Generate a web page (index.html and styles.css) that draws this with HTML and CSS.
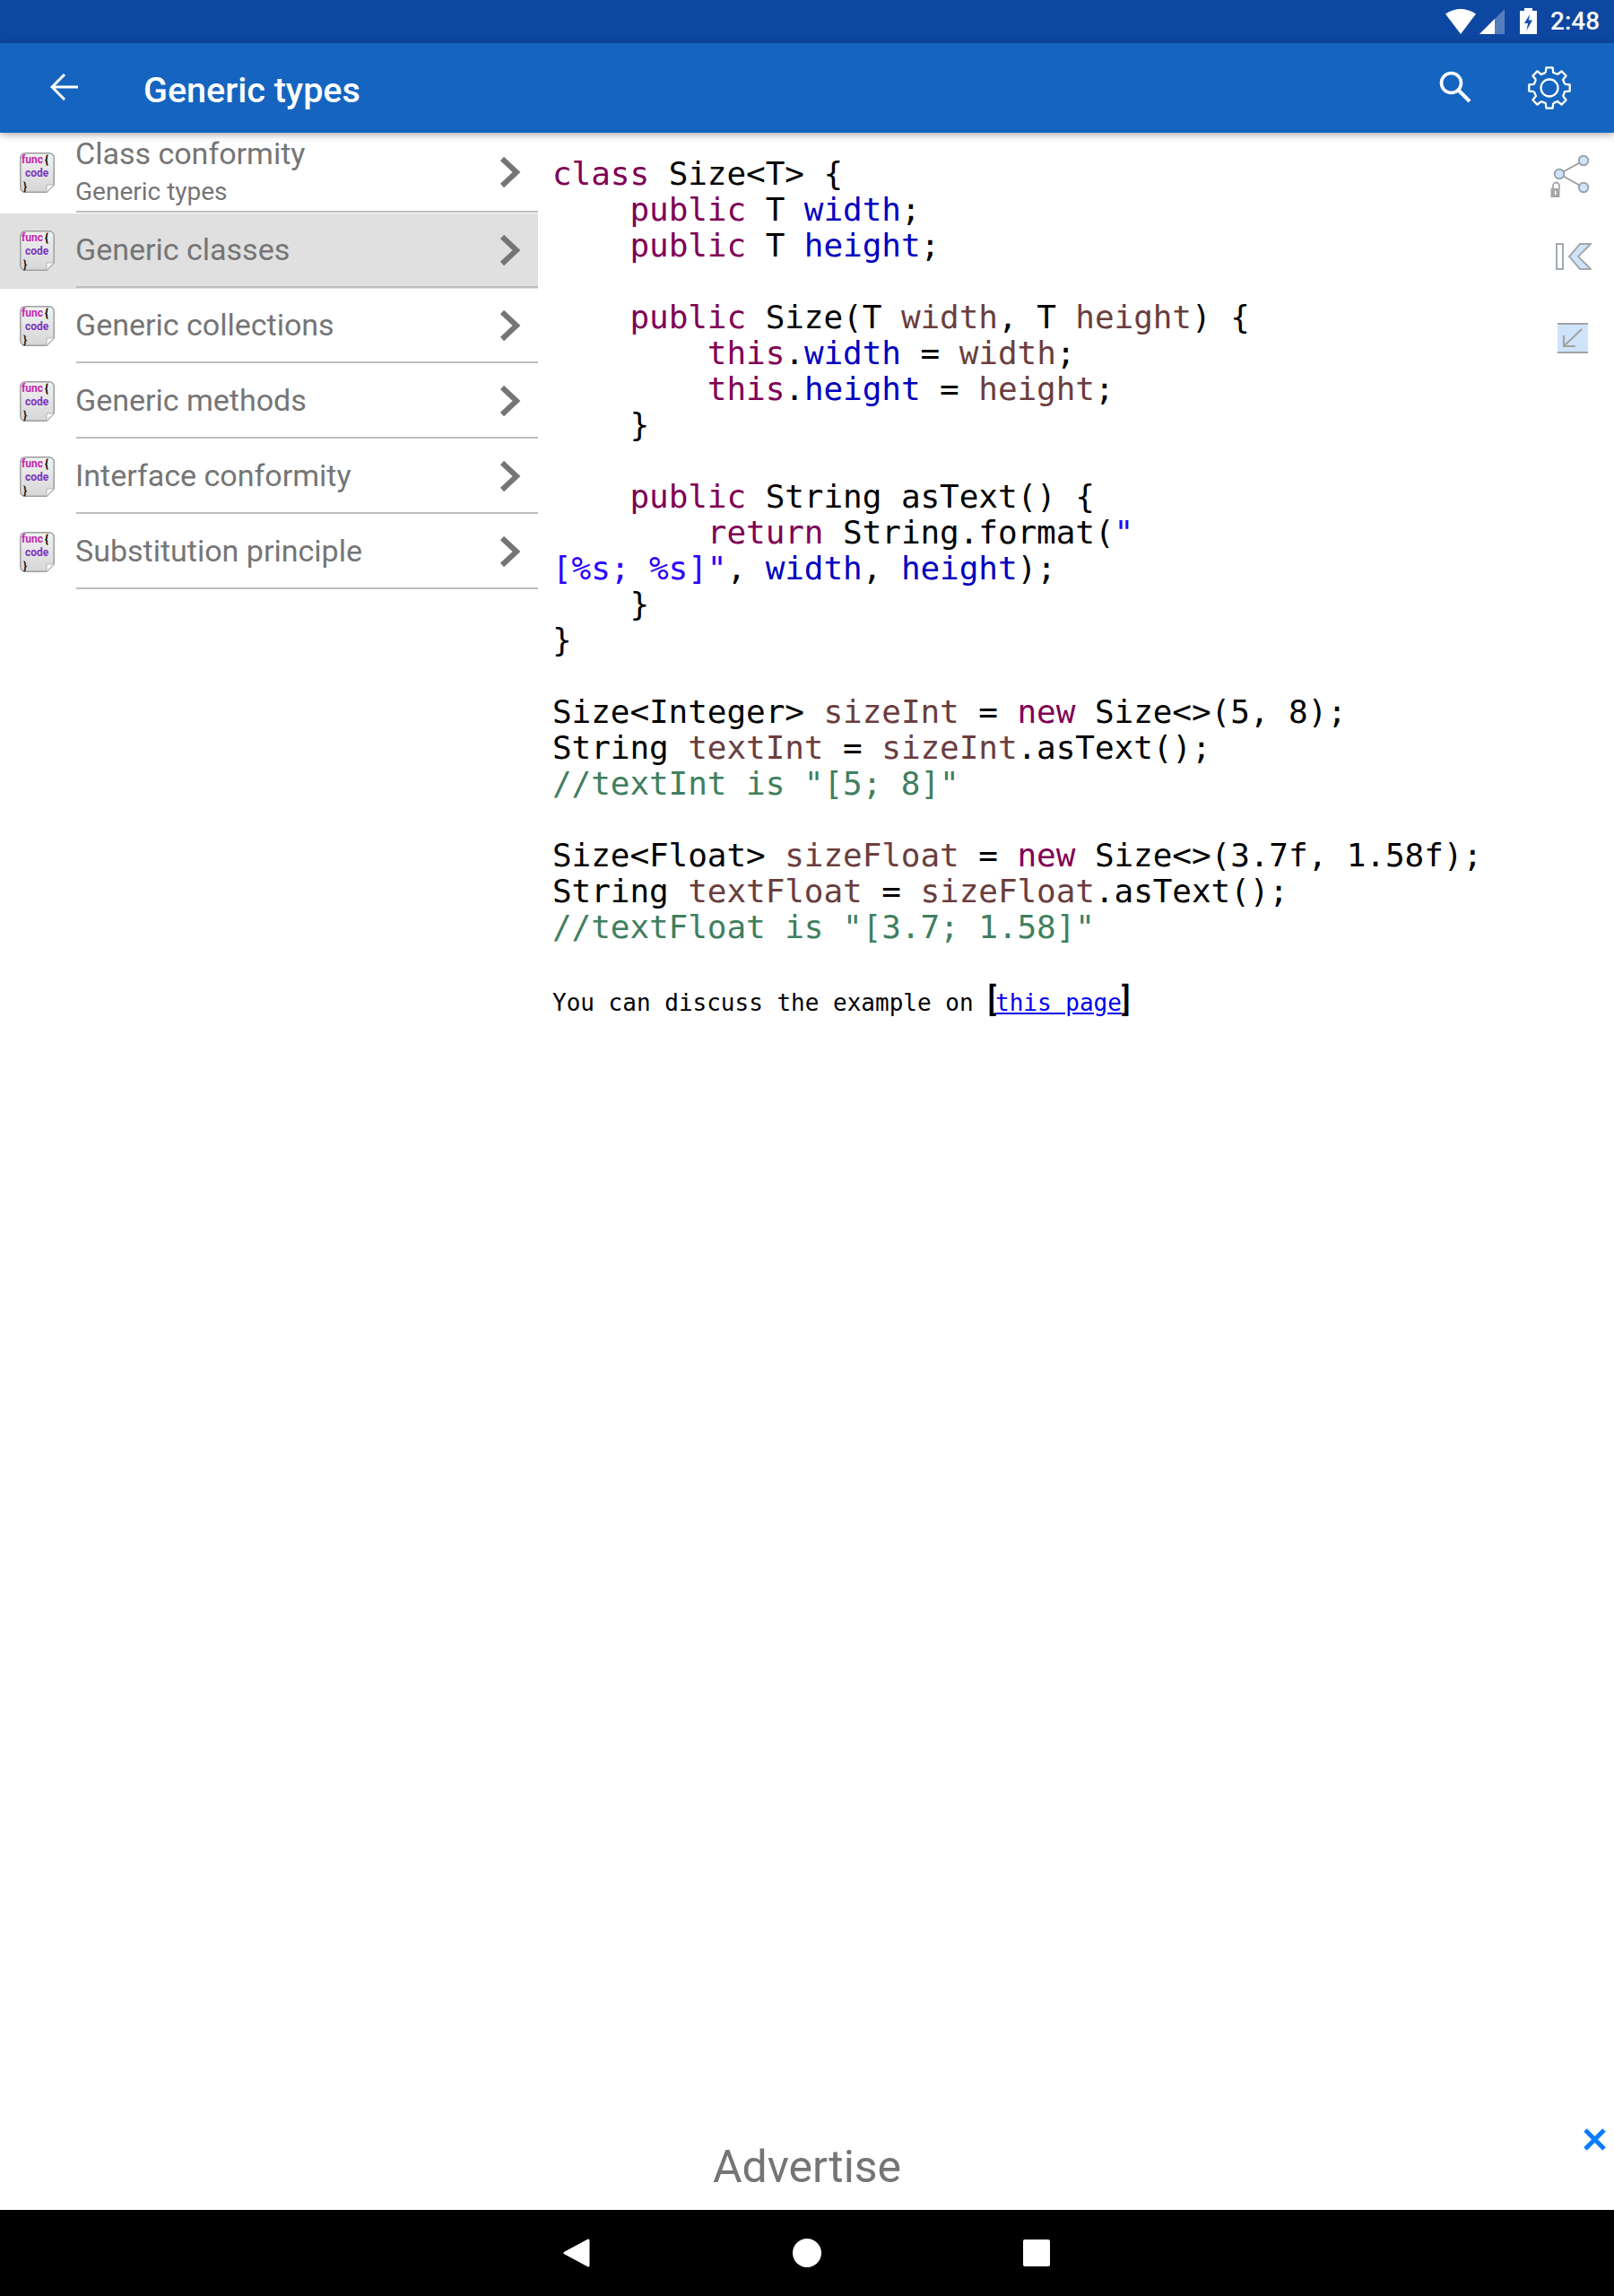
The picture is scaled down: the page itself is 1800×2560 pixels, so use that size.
FILE: index.html
```html
<!DOCTYPE html>
<html lang="en">
<head>
<meta charset="utf-8">
<title>Generic types</title>
<link rel="stylesheet" href="styles.css">
</head>
<body>
<svg class="defs" width="0" height="0" aria-hidden="true">
  <defs>
    <linearGradient id="docfill" x1="0" y1="0" x2="0" y2="1"><stop offset="0" stop-color="#f2f2f2"/><stop offset="1" stop-color="#d6d6d6"/></linearGradient>
    <symbol id="docshape" viewBox="0 0 39 45">
      <path d="M6 .8H33A5.200 5.200 0 0 1 38.200 6V36L30 44.200H6A5.200 5.200 0 0 1 .8 39V6A5.200 5.200 0 0 1 6 .8Z" fill="url(#docfill)" stroke="#9e9e9e" stroke-width="1.500"/>
      <path d="M38.200 36H30V44.200Z" fill="#fafafa" stroke="#b5b5b5" stroke-width="1"/>
    </symbol>
    <path id="tooth" d="M19.800 7L20.400 1.300L27.600 1.300L28.200 7A17.500 17.500 0 0 1 33 9" fill="none" stroke="#fff" stroke-width="2.300" stroke-linejoin="round"/>
    <symbol id="chevron" viewBox="0 0 24 36"><path d="M3 3L19 18L3 33" fill="none" stroke="#757575" stroke-width="6"/></symbol>
  </defs>
</svg>
<div class="page">
  <header class="status-bar">
    <svg class="ic-wifi" width="34" height="28" viewBox="0 0 34 28"><path d="M0 5.500Q17 -5.500 34 5.500L17 28Z" fill="#fff"/></svg>
    <svg class="ic-signal" width="28" height="28" viewBox="0 0 28 28"><path d="M28 0V28H0Z" fill="#fff" opacity=".3"/><path d="M17 11V28H0Z" fill="#fff"/></svg>
    <svg class="ic-battery" width="19" height="29" viewBox="0 0 19 29"><path d="M5 0H14V3H19V29H0V3H5Z" fill="#fff"/><path d="M11 7L5 17H9L7.500 25L14 13.500H10Z" fill="#1552a8"/></svg>
    <span class="clock">2:48</span>
  </header>
  <nav class="app-bar">
    <svg class="ic-back" width="32" height="32" viewBox="0 0 32 32"><path d="M31 16H3M16 2L2 16L16 30" fill="none" stroke="#fff" stroke-width="3"/></svg>
    <h1 class="app-title">Generic types</h1>
    <svg class="ic-search" width="36" height="36" viewBox="0 0 36 36"><circle cx="13.500" cy="13.500" r="11" fill="none" stroke="#fff" stroke-width="3.600"/><path d="M21.500 21.500L34 34" stroke="#fff" stroke-width="4" fill="none"/></svg>
    <svg class="ic-gear" width="48" height="48" viewBox="0 0 48 48">
      <use href="#tooth"/><use href="#tooth" transform="rotate(45 24 24)"/><use href="#tooth" transform="rotate(90 24 24)"/><use href="#tooth" transform="rotate(135 24 24)"/><use href="#tooth" transform="rotate(180 24 24)"/><use href="#tooth" transform="rotate(225 24 24)"/><use href="#tooth" transform="rotate(270 24 24)"/><use href="#tooth" transform="rotate(315 24 24)"/>
      <circle cx="24" cy="24" r="9.500" fill="none" stroke="#fff" stroke-width="2.300"/>
    </svg>
  </nav>
  <main class="main">
    <aside class="sidebar">
      <a class="row row-first">
        <div class="doc"><svg class="doc-bg" width="39" height="45"><use href="#docshape"/></svg><span class="f">func<b>{</b></span><span class="c">code</span><span class="e">}</span></div>
        <div class="row-body"><div class="row-text"><div class="row-title">Class conformity</div><div class="row-sub">Generic types</div></div><svg class="chev" width="24" height="36"><use href="#chevron"/></svg></div>
      </a>
      <a class="row row-active">
        <div class="doc"><svg class="doc-bg" width="39" height="45"><use href="#docshape"/></svg><span class="f">func<b>{</b></span><span class="c">code</span><span class="e">}</span></div>
        <div class="row-body"><div class="row-text"><div class="row-title">Generic classes</div></div><svg class="chev" width="24" height="36"><use href="#chevron"/></svg></div>
      </a>
      <a class="row">
        <div class="doc"><svg class="doc-bg" width="39" height="45"><use href="#docshape"/></svg><span class="f">func<b>{</b></span><span class="c">code</span><span class="e">}</span></div>
        <div class="row-body"><div class="row-text"><div class="row-title">Generic collections</div></div><svg class="chev" width="24" height="36"><use href="#chevron"/></svg></div>
      </a>
      <a class="row">
        <div class="doc"><svg class="doc-bg" width="39" height="45"><use href="#docshape"/></svg><span class="f">func<b>{</b></span><span class="c">code</span><span class="e">}</span></div>
        <div class="row-body"><div class="row-text"><div class="row-title">Generic methods</div></div><svg class="chev" width="24" height="36"><use href="#chevron"/></svg></div>
      </a>
      <a class="row">
        <div class="doc"><svg class="doc-bg" width="39" height="45"><use href="#docshape"/></svg><span class="f">func<b>{</b></span><span class="c">code</span><span class="e">}</span></div>
        <div class="row-body"><div class="row-text"><div class="row-title">Interface conformity</div></div><svg class="chev" width="24" height="36"><use href="#chevron"/></svg></div>
      </a>
      <a class="row">
        <div class="doc"><svg class="doc-bg" width="39" height="45"><use href="#docshape"/></svg><span class="f">func<b>{</b></span><span class="c">code</span><span class="e">}</span></div>
        <div class="row-body"><div class="row-text"><div class="row-title">Substitution principle</div></div><svg class="chev" width="24" height="36"><use href="#chevron"/></svg></div>
      </a>
    </aside>
    <section class="content">
<pre class="code"><span class="k">class</span> Size&lt;T&gt; {
    <span class="k">public</span> T <span class="m">width</span>;
    <span class="k">public</span> T <span class="m">height</span>;

    <span class="k">public</span> Size(T <span class="v">width</span>, T <span class="v">height</span>) {
        <span class="k">this</span>.<span class="m">width</span> = <span class="v">width</span>;
        <span class="k">this</span>.<span class="m">height</span> = <span class="v">height</span>;
    }

    <span class="k">public</span> String asText() {
        <span class="k">return</span> String.format(<span class="s">"</span>
<span class="s">[%s; %s]"</span>, <span class="m">width</span>, <span class="m">height</span>);
    }
}

Size&lt;Integer&gt; <span class="v">sizeInt</span> = <span class="k">new</span> Size&lt;&gt;(5, 8);
String <span class="v">textInt</span> = <span class="v">sizeInt</span>.asText();
<span class="g">//textInt is "[5; 8]"</span>

Size&lt;Float&gt; <span class="v">sizeFloat</span> = <span class="k">new</span> Size&lt;&gt;(3.7f, 1.58f);
String <span class="v">textFloat</span> = <span class="v">sizeFloat</span>.asText();
<span class="g">//textFloat is "[3.7; 1.58]"</span></pre>
      <p class="discuss">You can discuss the example on <span class="br">[</span><a class="link">this page</a><span class="br">]</span></p>
    </section>
    <aside class="tools">
      <svg class="tool-share" width="48" height="50" viewBox="0 0 48 50">
        <path d="M11 22L38 7M11 22L38 37" stroke="#9e9e9e" stroke-width="2"/>
        <circle cx="11" cy="22" r="5.300" fill="#cfe3fb" stroke="#9aa5b1" stroke-width="2"/><circle cx="38" cy="7" r="5.300" fill="#cfe3fb" stroke="#9aa5b1" stroke-width="2"/><circle cx="38" cy="37" r="5.300" fill="#cfe3fb" stroke="#9aa5b1" stroke-width="2"/>
        <path d="M4 38V35A3.500 3.500 0 0 1 11 35V38" fill="none" stroke="#a6a6a6" stroke-width="1.800"/><rect x="1.500" y="38" width="10" height="10" fill="#a6a6a6"/><rect x="6" y="41" width="1.500" height="4" fill="#fff"/>
      </svg>
      <svg class="tool-first" width="40" height="30" viewBox="0 0 40 30">
        <rect x="1" y="1" width="7" height="28" fill="#fff" stroke="#a3a9b0" stroke-width="2"/>
        <path d="M39 1H27L15 15L27 29H39L25 15Z" fill="#cfe3fb" stroke="#a3a9b0" stroke-width="2"/>
      </svg>
      <svg class="tool-min" width="34" height="34" viewBox="0 0 34 34">
        <rect x="0" y="2" width="34" height="30" fill="#cfe3fb"/>
        <rect x="0" y="0" width="34" height="2" fill="#a3a3a3"/><rect x="0" y="32" width="34" height="2" fill="#a3a3a3"/>
        <path d="M27 7L7 26M7 14V26H20" fill="none" stroke="#a3a3a3" stroke-width="2.200"/>
      </svg>
    </aside>
  </main>
  <footer class="ad">
    <span class="ad-text">Advertise</span>
    <svg class="ad-close" width="27" height="25" viewBox="0 0 27 25"><path d="M3 2L24 23M24 2L3 23" stroke="#0a7cff" stroke-width="5" fill="none"/></svg>
  </footer>
  <div class="nav-bar">
    <svg class="nav-back" width="30" height="32" viewBox="0 0 30 32"><path d="M28 2V30L2 16Z" fill="#fff" stroke="#fff" stroke-width="3" stroke-linejoin="round"/></svg>
    <i class="nav-home"></i>
    <i class="nav-recent"></i>
  </div>
</div>
</body>
</html>
```
FILE: styles.css
```css
* { box-sizing: border-box; }
html, body { margin: 0; padding: 0; background: #fff; }
.defs { position: absolute; }
.page { width: 1800px; height: 2560px; display: flex; flex-direction: column; overflow: hidden; font-family: Roboto, sans-serif; }

.status-bar { height: 48px; flex: none; background: #0d47a1; display: flex; align-items: flex-start; padding: 9px 18px 0 0; justify-content: flex-end; color: #fff; }
.ic-wifi { margin-top: 1px; margin-right: 4px; }
.ic-signal { margin-top: 1px; margin-right: 17px; }
.ic-battery { margin-right: 15px; }
.clock { font-size: 28px; font-weight: 500; line-height: 30px; width: 53px; }

.app-bar { height: 100px; flex: none; background: #1565c0; display: flex; align-items: center; position: relative; z-index: 2; box-shadow: 0 2px 8px rgba(0,0,0,.35); padding-left: 56px; color: #fff; }
.ic-back { margin-bottom: 2px; }
.app-title { margin: 0 0 0 72px; flex: 1; font-size: 39.500px; font-weight: 500; line-height: 50px; padding-top: 5px; }
.ic-search { margin-right: 63px; margin-bottom: 2px; }
.ic-gear { margin-right: 48px; }

.main { flex: 1; display: flex; min-height: 0; }
.sidebar { width: 600px; flex: none; }
.row { display: flex; height: 84px; padding-bottom: 1px; color: #757575; }
.row-first { height: 90px; }
.row-active { background: #e0e0e0; }
.doc { width: 39px; height: 45px; margin: 19px 0 0 22px; flex: none; position: relative; font-weight: 700; font-size: 12px; line-height: 15px; padding: 1px 0 0 2px; display: flex; flex-direction: column; }
.row-first .doc { margin-top: 22px; }
.doc-bg { position: absolute; left: 0; top: 0; }
.doc span { position: relative; }
.doc .f { color: #c026b0; }
.doc .f b { color: #111; margin-left: 2px; }
.doc .c { color: #7a35c0; margin-left: 4px; }
.doc .e { color: #111; margin-left: 2px; }
.row-body { flex: 1; margin-left: 24px; display: flex; align-items: center; border-bottom: 2px solid #bdbdbd; padding-right: 19px; }
.row-text { flex: 1; margin-left: -1px; }
.row-title { font-size: 34px; line-height: 44px; margin-top: -1px; }
.row-sub { font-size: 28px; line-height: 38px; margin-top: 2px; }
.row-first .row-title { margin-top: -2px; }

.content { flex: 1; padding: 26px 0 0 16px; min-width: 0; }
.code { margin: 0; font-family: "DejaVu Sans Mono", monospace; font-size: 36px; line-height: 40px; letter-spacing: -0.07px; color: #000; }
.k { color: #7f0055; }
.m { color: #0000c0; }
.v { color: #6a3e3e; }
.s { color: #2a00ff; }
.g { color: #3f7f5f; }
.discuss { margin: 41px 0 0; font-family: "DejaVu Sans Mono", monospace; font-size: 26px; line-height: 40px; white-space: pre; color: #000; }
.br { font-family: Roboto, sans-serif; font-size: 36px; font-weight: 500; letter-spacing: -1px; }
.link { color: #0000ee; text-decoration: underline; }

.tools { width: 84px; flex: none; display: flex; flex-direction: column; padding-top: 24px; }
.tool-share { margin-left: 12px; }
.tool-first { margin: 49px 0 0 19px; }
.tool-min { margin: 59px 0 0 21px; }

.ad { height: 96px; flex: none; position: relative; display: flex; justify-content: center; align-items: flex-end; }
.ad-text { font-size: 50px; line-height: 64px; color: #757575; padding-bottom: 16px; }
.ad-close { position: absolute; right: 8px; top: 5px; }

.nav-bar { height: 96px; flex: none; background: #000; display: flex; align-items: center; padding-left: 628px; }
.nav-home { width: 32px; height: 32px; border-radius: 50%; background: #fff; margin-left: 226px; }
.nav-recent { width: 30px; height: 30px; border-radius: 2px; background: #fff; margin-left: 225px; }
```
